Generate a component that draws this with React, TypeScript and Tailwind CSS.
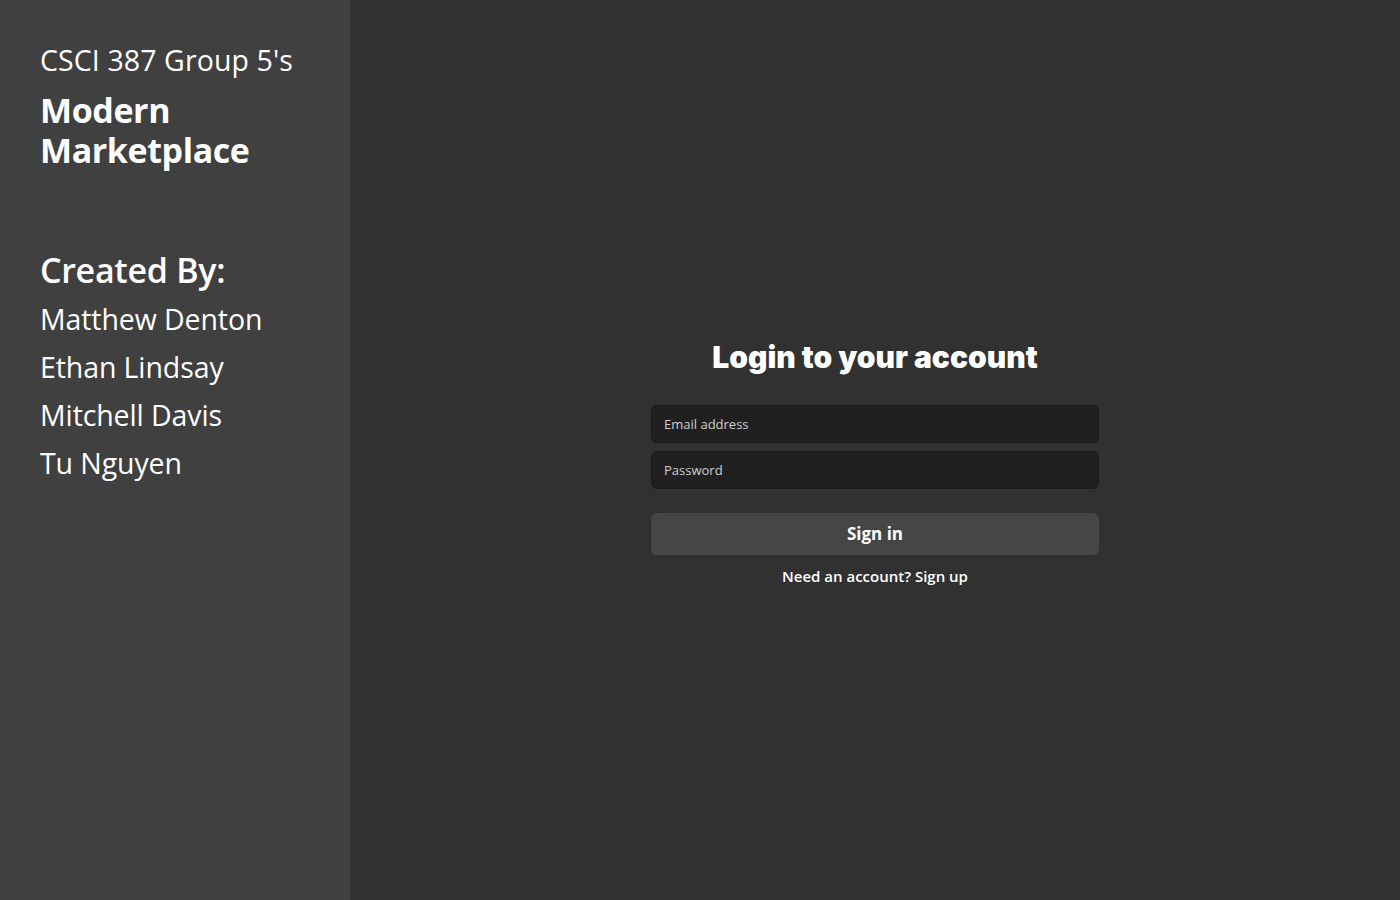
import React from "react";

export default function App() {
  const font = { fontFamily: '"Open Sans", "Noto Sans", sans-serif' };
  return (
    <div className="flex h-[900px] w-[1400px] text-white" style={font}>
      <aside className="w-[350px] shrink-0 bg-[#404040] px-10 pt-[40px]">
        <div className="text-[28.5px] leading-[40px] font-normal tracking-[0.1px]">CSCI 387 Group 5's</div>
        <h1 className="mt-[10px] text-[34px] leading-[40px] font-bold tracking-[-0.4px]">
          <span className="block">Modern</span>
          <span className="block">Marketplace</span>
        </h1>
        <h2 className="mt-[78px] text-[34px] leading-[44px] font-semibold tracking-[-0.3px]">Created By:</h2>
        <ul className="mt-[3px] flex flex-col">
          {["Matthew Denton", "Ethan Lindsay", "Mitchell Davis", "Tu Nguyen"].map((n) => (
            <li key={n} className="text-[28.5px] leading-[48px] tracking-[-0.1px]">
              {n}
            </li>
          ))}
        </ul>
      </aside>
      <main className="flex flex-1 flex-col items-center bg-[#313131] pt-[337px]">
        <h3
          className="text-[30px] leading-[40px] font-black"
          style={{ fontFamily: 'Inter, "Open Sans", sans-serif' }}
        >
          Login to your account
        </h3>
        <form className="mt-[28px] flex w-[448px] flex-col" onSubmit={(e) => e.preventDefault()}>
          <input
            type="email"
            placeholder="Email address"
            className="h-[38px] w-full rounded-md border border-[#1a1a1a] bg-[#202020] px-3 text-[13px] text-[#ddd] placeholder:text-[#cfcfcf] outline-none"
          />
          <input
            type="password"
            placeholder="Password"
            className="mt-[8px] h-[38px] w-full rounded-md border border-[#1a1a1a] bg-[#202020] px-3 text-[13px] text-[#ddd] placeholder:text-[#cfcfcf] outline-none"
          />
          <button
            type="submit"
            className="mt-[24px] h-[42px] w-full rounded-md bg-[#464646] text-[17px] font-bold text-white"
          >
            Sign in
          </button>
          <p className="mt-[9px] text-center text-[15px] leading-[24px] font-semibold">Need an account? Sign up</p>
        </form>
      </main>
    </div>
  );
}
